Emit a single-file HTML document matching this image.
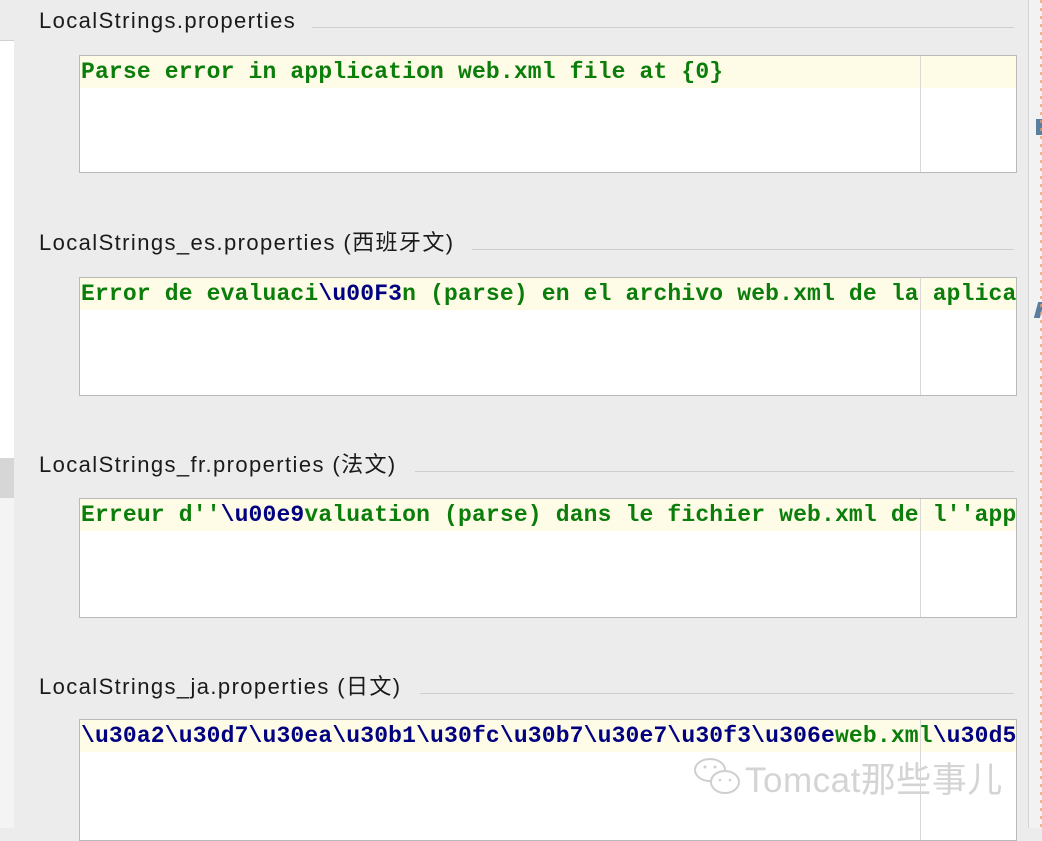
<!DOCTYPE html>
<html><head><meta charset="utf-8"><style>
body{margin:0;width:1042px;height:828px;overflow:hidden;background:#ececec;position:relative;font-family:"Liberation Sans","Noto Sans CJK SC",sans-serif}
.abs{position:absolute}
.h{position:absolute;left:39px;font-size:22px;letter-spacing:1.4px;color:#1a1a1a;white-space:nowrap;line-height:24px}
.hl{position:absolute;height:1px;background:#cfcfcf;right:28px}
.box{position:absolute;left:79px;width:936px;background:#fff;border:1px solid #b9b9b9;overflow:hidden}
.box .y{position:absolute;left:0;top:0;width:100%;height:32px;background:#fefbe6}
.box .v{position:absolute;left:840px;top:0;bottom:0;width:1px;background:#d8d8d8}
.box .t{position:absolute;left:1px;top:2px;font-family:"Liberation Mono",monospace;font-weight:bold;font-size:23px;letter-spacing:0.16px;color:#0a7d0a;white-space:nowrap;line-height:28px}
.e{color:#000080}
</style></head><body>
<div class="abs" style="left:0;top:40px;width:14px;height:418px;background:#fff;border-top:1px solid #d0d0d0"></div>
<div class="abs" style="left:0;top:458px;width:14px;height:40px;background:#d6d6d6"></div>
<div class="abs" style="left:0;top:498px;width:14px;height:330px;background:#f4f4f4"></div>
<div class="abs" style="left:1028px;top:0;width:1px;height:828px;background:#d4d4d4"></div>
<div class="abs" style="left:1029px;top:0;width:13px;height:828px;background:#f2f2f2"></div>
<div class="abs" style="left:1036px;top:119px;width:6px;height:16px;background:#5a7ea0"></div>
<div class="abs" style="left:1036px;top:302px;width:6px;height:16px;background:#5a7ea0;transform:skewX(-15deg)"></div>
<div class="abs" style="left:1040px;top:0;width:2px;height:828px;background:repeating-linear-gradient(#e8a060 0 3px,transparent 3px 8px);opacity:.7"></div>

<div class="h" style="top:9px">LocalStrings.properties</div>
<div class="hl" style="left:312px;top:27px"></div>
<div class="box" style="top:55px;height:116px"><div class="y"></div><div class="v"></div><div class="t">Parse error in application web.xml file at {0}</div></div>

<div class="h" style="top:231px">LocalStrings_es.properties (西班牙文)</div>
<div class="hl" style="left:472px;top:249px"></div>
<div class="box" style="top:277px;height:117px"><div class="y"></div><div class="v"></div><div class="t">Error de evaluaci<span class="e">\u00F3</span>n (parse) en el archivo web.xml de la aplicación</div></div>

<div class="h" style="top:453px">LocalStrings_fr.properties (法文)</div>
<div class="hl" style="left:415px;top:471px"></div>
<div class="box" style="top:498px;height:118px"><div class="y"></div><div class="v"></div><div class="t">Erreur d''<span class="e">\u00e9</span>valuation (parse) dans le fichier web.xml de l''application</div></div>

<div class="h" style="top:675px">LocalStrings_ja.properties (日文)</div>
<div class="hl" style="left:420px;top:693px"></div>
<div class="box" style="top:719px;height:120px"><div class="y"></div><div class="v"></div><div class="t"><span class="e">\u30a2\u30d7\u30ea\u30b1\u30fc\u30b7\u30e7\u30f3\u306e</span>web.xml<span class="e">\u30d5\u30a1</span></div></div>

<svg class="abs" style="left:692px;top:756px" width="52" height="42" viewBox="0 0 52 42"><g fill="none" stroke="#cfcfcf" stroke-width="2"><ellipse cx="18" cy="14" rx="15" ry="11"/><ellipse cx="33" cy="26" rx="14" ry="11" fill="#fff"/></g><g fill="#cfcfcf"><circle cx="13" cy="11" r="1.5"/><circle cx="23" cy="11" r="1.5"/><circle cx="28" cy="24" r="1.3"/><circle cx="38" cy="24" r="1.3"/></g></svg>
<div class="abs" style="left:745px;top:752px;font-size:35px;letter-spacing:0.5px;color:#d4d4d4;white-space:nowrap;font-family:'Liberation Sans','Noto Sans CJK SC',sans-serif">Tomcat那些事儿</div>
</body></html>
